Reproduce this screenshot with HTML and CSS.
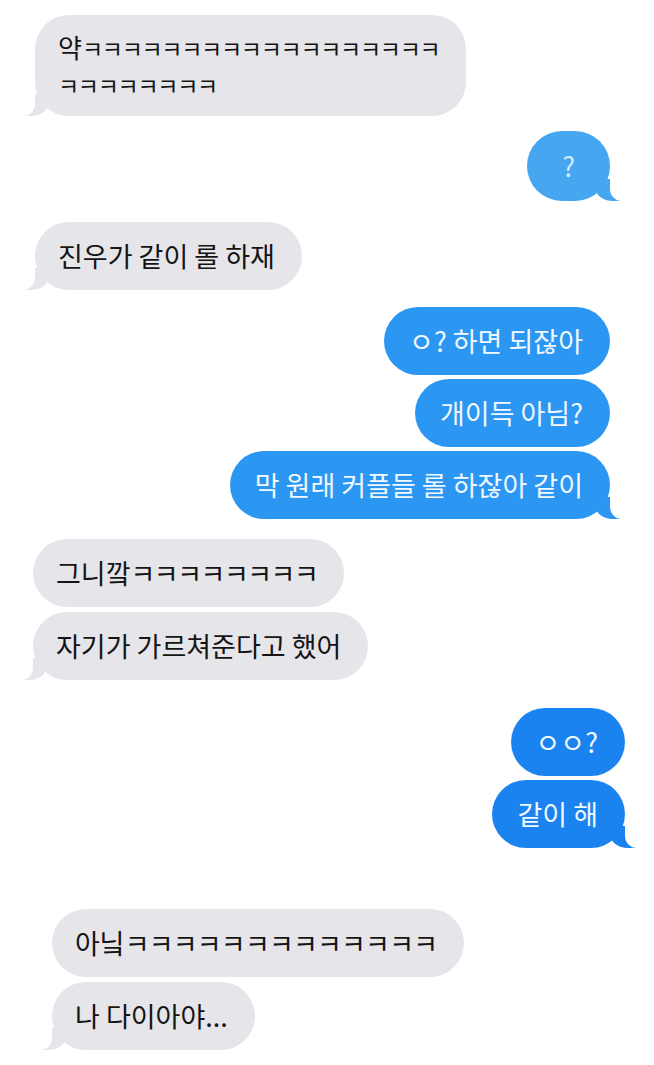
FILE: index.html
```html
<!DOCTYPE html>
<html>

<head>
    <meta charset="UTF-8">
    <meta name="viewport" content="width=device-width, initial-scale=1.0">
    <title>메시지</title>
    <link rel="stylesheet" href="styles.css">
</head>

<body>
    <div class="thread">
        <div class="group g1">
            <div class="bubble them tail two-line">약<span class="kk tight">ㅋㅋㅋㅋㅋㅋㅋㅋㅋㅋㅋㅋㅋㅋㅋㅋㅋㅋ</span><br><span class="kk tight">ㅋㅋㅋㅋㅋㅋㅋㅋ</span></div>
        </div>

        <div class="group g2">
            <div class="bubble me sky tail q">?</div>
        </div>

        <div class="group g3">
            <div class="bubble them tail">진우가 같이 롤 하재</div>
        </div>

        <div class="group g4">
            <div class="bubble me">ㅇ? 하면 되잖아</div>
            <div class="bubble me">개이득 아님?</div>
            <div class="bubble me tail">막 원래 커플들 롤 하잖아 같이</div>
        </div>

        <div class="group g5">
            <div class="bubble them">그니깤<span class="kk">ㅋㅋㅋㅋㅋㅋㅋㅋ</span></div>
            <div class="bubble them tail">자기가 가르쳐준다고 했어</div>
        </div>

        <div class="group g6">
            <div class="bubble me deep">ㅇㅇ?</div>
            <div class="bubble me deep tail">같이 해</div>
        </div>

        <div class="group g7">
            <div class="bubble them">아닠<span class="kk loose">ㅋㅋㅋㅋㅋㅋㅋㅋㅋㅋㅋㅋㅋ</span></div>
            <div class="bubble them tail">나 다이아야...</div>
        </div>
    </div>
</body>

</html>
```

FILE: styles.css
```css
body {
    margin: 0;
    background: #fff;
    font-family: "Noto Sans CJK KR", "Noto Sans", sans-serif;
}
.thread {
    display: flex;
    flex-direction: column;
    padding-top: 15px;
}
.group {
    display: flex;
    flex-direction: column;
    gap: 5px;
    padding: 0 44px 0 35px;
}
.g2 { margin-top: 15px; }
.g3 { margin-top: 21px; }
.g4 { margin-top: 17px; gap: 4px; }
.g5 { margin-top: 20px; padding-left: 33px; }
.g6 { margin-top: 28px; gap: 4px; padding-right: 29px; }
.g7 { margin-top: 61px; padding-left: 52px; }

.bubble {
    position: relative;
    padding: 17px 27px 17px 23px;
    border-radius: 34px;
    font-size: 27px;
    line-height: 34px;
    white-space: nowrap;
}
.two-line {
    padding-top: 14px;
    padding-bottom: 13px;
    font-size: 26px;
    line-height: 35px;
}
.them {
    align-self: flex-start;
    background: #e5e5ea;
    color: #141414;
}
.me {
    align-self: flex-end;
    padding-left: 25px;
    background: #2c97f2;
    color: #f1f8ff;
}
.kk {
    letter-spacing: -1.5px;
}
.kk.loose {
    letter-spacing: -0.8px;
}
.kk.tight {
    font-size: 23px;
    letter-spacing: -1.3px;
}
.sky {
    background: #46a6f0;
}
.deep {
    background: #1a83ef;
}
.q {
    padding: 18px 35px;
    color: #d6ecff;
    border-radius: 36px;
}

/* bubble tails */
.tail::before,
.tail::after {
    content: "";
    position: absolute;
    bottom: 0;
    height: 22px;
}
.them.tail::before {
    left: -12px;
    width: 26px;
    background: inherit;
    border-bottom-right-radius: 18px 14px;
}
.them.tail::after {
    left: -20px;
    width: 20px;
    background: #fff;
    border-bottom-right-radius: 12px;
}
.me.tail::before {
    right: -11px;
    width: 26px;
    background: inherit;
    border-bottom-left-radius: 18px 14px;
}
.me.tail::after {
    right: -20px;
    width: 20px;
    background: #fff;
    border-bottom-left-radius: 12px;
}
```
